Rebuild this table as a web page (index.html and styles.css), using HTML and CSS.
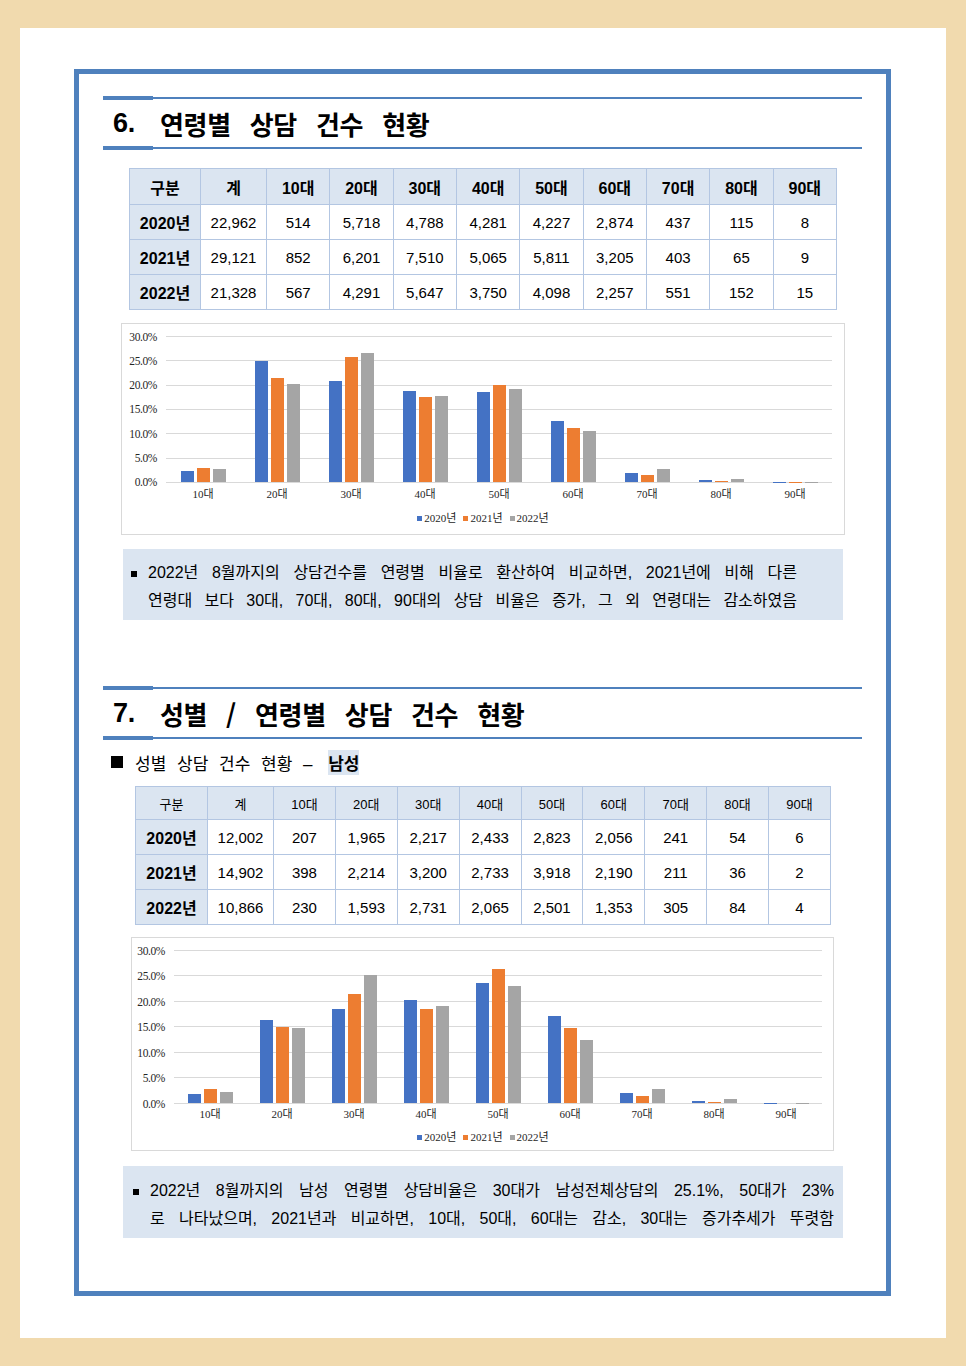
FILE: index.html
```html
<!DOCTYPE html>
<html lang="ko">
<head>
<meta charset="utf-8">
<title>연령별 상담 건수 현황</title>
<link rel="stylesheet" href="styles.css">
</head>
<body>
<div class="sheet">
  <div class="frame">

    <div class="rule rule-first"></div>
    <h1 class="title"><span class="num">6.</span> 연령별 상담 건수 현황</h1>
    <div class="rule"></div>

    <table class="data-table t1">
      <colgroup><col class="c-lab"><col class="c-tot"><col span="9"></colgroup>
      <thead>
        <tr><th>구분</th><th>계</th><th>10대</th><th>20대</th><th>30대</th><th>40대</th><th>50대</th><th>60대</th><th>70대</th><th>80대</th><th>90대</th></tr>
      </thead>
      <tbody>
        <tr><th class="year">2020년</th><td>22,962</td><td>514</td><td>5,718</td><td>4,788</td><td>4,281</td><td>4,227</td><td>2,874</td><td>437</td><td>115</td><td>8</td></tr>
        <tr><th class="year">2021년</th><td>29,121</td><td>852</td><td>6,201</td><td>7,510</td><td>5,065</td><td>5,811</td><td>3,205</td><td>403</td><td>65</td><td>9</td></tr>
        <tr><th class="year">2022년</th><td>21,328</td><td>567</td><td>4,291</td><td>5,647</td><td>3,750</td><td>4,098</td><td>2,257</td><td>551</td><td>152</td><td>15</td></tr>
      </tbody>
    </table>

    <div class="chart chart-1">
      <div class="chart-grid">
        <div class="y-axis"><span>30.0%</span><span>25.0%</span><span>20.0%</span><span>15.0%</span><span>10.0%</span><span>5.0%</span><span>0.0%</span></div>
        <div class="plot">
          <div class="group"><span class="bar s20" style="--v:2.24"></span><span class="bar s21" style="--v:2.93"></span><span class="bar s22" style="--v:2.66"></span></div>
          <div class="group"><span class="bar s20" style="--v:24.90"></span><span class="bar s21" style="--v:21.29"></span><span class="bar s22" style="--v:20.12"></span></div>
          <div class="group"><span class="bar s20" style="--v:20.85"></span><span class="bar s21" style="--v:25.79"></span><span class="bar s22" style="--v:26.48"></span></div>
          <div class="group"><span class="bar s20" style="--v:18.64"></span><span class="bar s21" style="--v:17.39"></span><span class="bar s22" style="--v:17.58"></span></div>
          <div class="group"><span class="bar s20" style="--v:18.41"></span><span class="bar s21" style="--v:19.95"></span><span class="bar s22" style="--v:19.21"></span></div>
          <div class="group"><span class="bar s20" style="--v:12.52"></span><span class="bar s21" style="--v:11.01"></span><span class="bar s22" style="--v:10.58"></span></div>
          <div class="group"><span class="bar s20" style="--v:1.90"></span><span class="bar s21" style="--v:1.38"></span><span class="bar s22" style="--v:2.58"></span></div>
          <div class="group"><span class="bar s20" style="--v:0.50"></span><span class="bar s21" style="--v:0.22"></span><span class="bar s22" style="--v:0.71"></span></div>
          <div class="group"><span class="bar s20" style="--v:0.03"></span><span class="bar s21" style="--v:0.03"></span><span class="bar s22" style="--v:0.07"></span></div>
        </div>
        <div class="x-axis"><span>10대</span><span>20대</span><span>30대</span><span>40대</span><span>50대</span><span>60대</span><span>70대</span><span>80대</span><span>90대</span></div>
      </div>
      <div class="legend"><span class="key k20">2020년</span><span class="key k21">2021년</span><span class="key k22">2022년</span></div>
    </div>

    <div class="note note-1">
      <span class="note-bullet"></span>
      <div class="note-text">
        <p>2022년 8월까지의 상담건수를 연령별 비율로 환산하여 비교하면, 2021년에 비해 다른</p>
        <p>연령대 보다 30대, 70대, 80대, 90대의 상담 비율은 증가, 그 외 연령대는 감소하였음</p>
      </div>
    </div>

    <div class="rule rule-second"></div>
    <h1 class="title"><span class="num">7.</span> 성별 / 연령별 상담 건수 현황</h1>
    <div class="rule"></div>

    <h2 class="subtitle"><span class="sq"></span>성별 상담 건수 현황 – <span class="hl">남성</span></h2>

    <table class="data-table t2">
      <colgroup><col class="c-lab"><col class="c-tot"><col span="9"></colgroup>
      <thead>
        <tr><th>구분</th><th>계</th><th>10대</th><th>20대</th><th>30대</th><th>40대</th><th>50대</th><th>60대</th><th>70대</th><th>80대</th><th>90대</th></tr>
      </thead>
      <tbody>
        <tr><th class="year">2020년</th><td>12,002</td><td>207</td><td>1,965</td><td>2,217</td><td>2,433</td><td>2,823</td><td>2,056</td><td>241</td><td>54</td><td>6</td></tr>
        <tr><th class="year">2021년</th><td>14,902</td><td>398</td><td>2,214</td><td>3,200</td><td>2,733</td><td>3,918</td><td>2,190</td><td>211</td><td>36</td><td>2</td></tr>
        <tr><th class="year">2022년</th><td>10,866</td><td>230</td><td>1,593</td><td>2,731</td><td>2,065</td><td>2,501</td><td>1,353</td><td>305</td><td>84</td><td>4</td></tr>
      </tbody>
    </table>

    <div class="chart chart-2">
      <div class="chart-grid">
        <div class="y-axis"><span>30.0%</span><span>25.0%</span><span>20.0%</span><span>15.0%</span><span>10.0%</span><span>5.0%</span><span>0.0%</span></div>
        <div class="plot">
          <div class="group"><span class="bar s20" style="--v:1.72"></span><span class="bar s21" style="--v:2.67"></span><span class="bar s22" style="--v:2.12"></span></div>
          <div class="group"><span class="bar s20" style="--v:16.37"></span><span class="bar s21" style="--v:14.86"></span><span class="bar s22" style="--v:14.66"></span></div>
          <div class="group"><span class="bar s20" style="--v:18.47"></span><span class="bar s21" style="--v:21.47"></span><span class="bar s22" style="--v:25.13"></span></div>
          <div class="group"><span class="bar s20" style="--v:20.27"></span><span class="bar s21" style="--v:18.34"></span><span class="bar s22" style="--v:19.00"></span></div>
          <div class="group"><span class="bar s20" style="--v:23.52"></span><span class="bar s21" style="--v:26.29"></span><span class="bar s22" style="--v:23.02"></span></div>
          <div class="group"><span class="bar s20" style="--v:17.13"></span><span class="bar s21" style="--v:14.70"></span><span class="bar s22" style="--v:12.45"></span></div>
          <div class="group"><span class="bar s20" style="--v:2.01"></span><span class="bar s21" style="--v:1.42"></span><span class="bar s22" style="--v:2.81"></span></div>
          <div class="group"><span class="bar s20" style="--v:0.45"></span><span class="bar s21" style="--v:0.24"></span><span class="bar s22" style="--v:0.77"></span></div>
          <div class="group"><span class="bar s20" style="--v:0.05"></span><span class="bar s21" style="--v:0.01"></span><span class="bar s22" style="--v:0.04"></span></div>
        </div>
        <div class="x-axis"><span>10대</span><span>20대</span><span>30대</span><span>40대</span><span>50대</span><span>60대</span><span>70대</span><span>80대</span><span>90대</span></div>
      </div>
      <div class="legend"><span class="key k20">2020년</span><span class="key k21">2021년</span><span class="key k22">2022년</span></div>
    </div>

    <div class="note note-2">
      <span class="note-bullet"></span>
      <div class="note-text">
        <p>2022년 8월까지의 남성 연령별 상담비율은 30대가 남성전체상담의 25.1%, 50대가 23%</p>
        <p>로 나타났으며, 2021년과 비교하면, 10대, 50대, 60대는 감소, 30대는 증가추세가 뚜렷함</p>
      </div>
    </div>

  </div>
</div>
</body>
</html>
```

FILE: styles.css
```css
* { box-sizing: border-box; }

html, body {
  margin: 0;
  background: #f1daae;
}

body {
  font-family: "Liberation Sans", "Noto Sans CJK KR", sans-serif;
  color: #000;
}

.sheet {
  margin: 28px 20px;
  background: #fff;
  padding: 41px 55px 42px 54px;
}

.frame {
  height: 1227px;
  border: 5px solid #4f81bd;
  padding: 0 24px;
}

/* section rules */
.rule {
  height: 4px;
  background:
    linear-gradient(#4f81bd, #4f81bd) left center / 50px 4px no-repeat,
    linear-gradient(#4f81bd, #4f81bd) left center / 100% 2px no-repeat;
}
.rule-first { margin-top: 22px; }
.rule-second { margin-top: 66px; }

.title {
  margin: 0;
  height: 46px;
  display: flex;
  align-items: center;
  padding-left: 10px;
  font-family: "Noto Sans CJK KR", sans-serif;
  font-size: 26px;
  font-weight: 700;
  letter-spacing: -0.3px;
  word-spacing: 12px;
  white-space: pre;
}
.title .num {
  font-family: "Liberation Sans", sans-serif;
  font-size: 27px;
  margin-right: 6px;
}

/* subtitle */
.subtitle {
  margin: 11px 0 0 8px;
  height: 22px;
  display: flex;
  align-items: center;
  font-size: 17px;
  font-weight: 400;
  word-spacing: 6px;
  white-space: pre;
}
.subtitle .sq {
  width: 12px;
  height: 12px;
  background: #000;
  margin-right: 12px;
}
.subtitle .hl {
  background: #dbe5f1;
  font-weight: 700;
  margin-left: 5px;
}

/* tables */
.data-table {
  border-collapse: collapse;
  table-layout: fixed;
}
.data-table th,
.data-table td {
  border: 1px solid #b3c6e2;
  text-align: center;
  vertical-align: middle;
  padding: 0;
}
.data-table thead th {
  background: #dbe5f1;
}
.data-table th.year {
  background: #dbe5f1;
  font-size: 16px;
  font-weight: 700;
}
.data-table td {
  font-size: 15px;
}

.t1 {
  width: 708px;
  margin: 18px 0 0 26px;
}
.t1 .c-lab { width: 71px; }
.t1 .c-tot { width: 66px; }
.t1 thead th {
  height: 36px;
  font-size: 16px;
  font-weight: 700;
}
.t1 tbody th,
.t1 tbody td { height: 35px; }

.t2 {
  width: 696px;
  margin: 13px 0 0 32px;
}
.t2 .c-lab { width: 72px; }
.t2 .c-tot { width: 66px; }
.t2 thead th {
  height: 33px;
  font-size: 13px;
  font-weight: 400;
}
.t2 tbody th,
.t2 tbody td { height: 35px; }

/* charts */
.chart {
  border: 1px solid #d9d9d9;
  background: #fff;
  font-family: "Liberation Serif", "Noto Sans CJK KR", serif;
  color: #333;
}
.chart-1 {
  --plot: 146px;
  margin: 13px 0 0 18px;
  width: 724px;
  height: 212px;
  padding: 12px 12px 0 4px;
}
.chart-2 {
  --plot: 153px;
  margin: 12px 0 0 28px;
  width: 703px;
  height: 214px;
  padding: 12px 11px 0 4px;
}
.chart-grid {
  display: grid;
  grid-template-columns: 31px 1fr;
  grid-template-rows: calc(var(--plot) + 1px) auto;
  column-gap: 9px;
}
.chart-2 .chart-grid {
  grid-template-columns: 29px 1fr;
}
.y-axis {
  grid-column: 1;
  grid-row: 1;
  align-self: start;
  margin-top: -5.5px;
  height: calc(var(--plot) + 12px);
  display: flex;
  flex-direction: column;
  justify-content: space-between;
  align-items: flex-end;
  font-size: 11.5px;
  line-height: 12px;
  letter-spacing: -0.4px;
  color: #262626;
}
.plot {
  grid-column: 2;
  grid-row: 1;
  display: flex;
  padding-bottom: 1px;
  background: repeating-linear-gradient(to bottom, #d9d9d9 0 1px, transparent 1px calc(var(--plot) / 6));
}
.group {
  flex: 1;
  display: flex;
  justify-content: center;
  align-items: flex-end;
  gap: 3px;
}
.bar {
  width: 13px;
  height: calc(var(--v) * var(--plot) / 30);
}
.s20 { background: #4472c4; }
.s21 { background: #ed7d31; }
.s22 { background: #a5a5a5; }

.x-axis {
  grid-column: 2;
  grid-row: 2;
  display: flex;
  margin-top: 5px;
  height: 12px;
  font-size: 11px;
  line-height: 12px;
  color: #262626;
}
.chart-2 .x-axis { margin-top: 4px; }
.x-axis span {
  flex: 1;
  text-align: center;
}

.legend {
  display: flex;
  justify-content: center;
  gap: 7px;
  margin-top: 12px;
  height: 12px;
  font-size: 11px;
  line-height: 12px;
  padding-left: 8px;
  color: #262626;
}
.chart-2 .legend { margin-top: 11px; }
.key {
  display: flex;
  align-items: center;
}
.key::before {
  content: "";
  width: 5px;
  height: 5px;
  margin-right: 2px;
}
.k20::before { background: #4472c4; }
.k21::before { background: #ed7d31; }
.k22::before { background: #a5a5a5; }

/* notes */
.note {
  width: 720px;
  margin-left: 20px;
  background: #dbe5f1;
  display: flex;
  align-items: flex-start;
}
.note-1 {
  margin-top: 14px;
  height: 71px;
  padding: 10px 46px 5px 8px;
}
.note-2 {
  margin-top: 15px;
  height: 72px;
  padding: 11px 9px 5px 10px;
}
.note-bullet {
  flex: none;
  width: 6px;
  height: 6px;
  background: #000;
  margin: 12px 11px 0 0;
}
.note-text {
  flex: 1;
  font-size: 16px;
}
.note-text p {
  margin: 0;
  line-height: 28px;
  text-align: justify;
  text-align-last: justify;
}
```
